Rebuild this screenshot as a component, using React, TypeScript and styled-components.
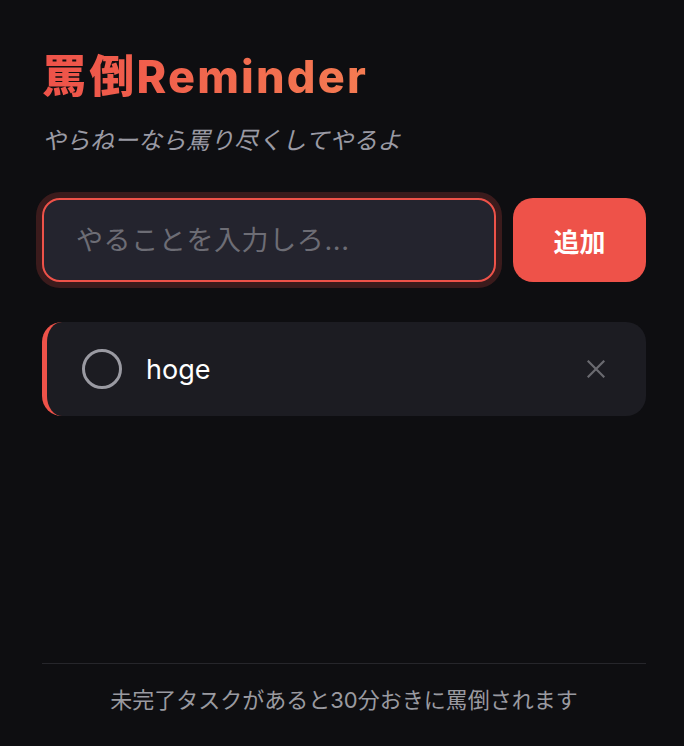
import React, { useState } from 'react';
import styled, { createGlobalStyle } from 'styled-components';

const GlobalStyle = createGlobalStyle`
  * {
    box-sizing: border-box;
  }
  html, body {
    margin: 0;
    padding: 0;
    background: #0e0e11;
  }
  body {
    font-family: Inter, "Noto Sans CJK JP", sans-serif;
    color: #ffffff;
  }
`;

const Page = styled.div`
  min-height: 100vh;
  display: flex;
  flex-direction: column;
  padding: 50px 38px 29px 42px;
`;

const Title = styled.h1`
  margin: 0;
  font-size: 45px;
  line-height: 1.2;
  font-weight: 800;
  letter-spacing: 2.2px;
  background: linear-gradient(90deg, #ee5249 0%, #f47b52 100%);
  -webkit-background-clip: text;
  background-clip: text;
  color: transparent;
  width: fit-content;
`;

const Subtitle = styled.p`
  margin: 19px 0 0;
  font-size: 24px;
  line-height: 1.5;
  font-style: italic;
  color: #9a9aa4;
`;

const InputRow = styled.form`
  display: flex;
  gap: 17px;
  margin-top: 39px;
`;

const TaskInput = styled.input`
  flex: 1;
  min-width: 0;
  height: 84px;
  padding: 0 32px;
  border: 2px solid #ee5249;
  border-radius: 18px;
  background: #24242e;
  color: #ffffff;
  font-family: Inter, "Noto Sans CJK JP", sans-serif;
  font-size: 27px;
  letter-spacing: 0.6px;
  outline: none;
  box-shadow: 0 0 0 6px rgba(238, 82, 73, 0.2);

  &::placeholder {
    color: #6d6d75;
  }
`;

const AddButton = styled.button`
  width: 133px;
  height: 84px;
  border: none;
  border-radius: 20px;
  background: #ee5249;
  color: #ffffff;
  font-family: Inter, "Noto Sans CJK JP", sans-serif;
  font-size: 26px;
  font-weight: 700;
  cursor: pointer;
`;

const TaskList = styled.ul`
  list-style: none;
  margin: 40px 0 0;
  padding: 0;
  display: flex;
  flex-direction: column;
  gap: 16px;
`;

const TaskItem = styled.li<{ $done: boolean }>`
  display: flex;
  align-items: center;
  height: 94px;
  padding: 0 35px 0 35px;
  border-left: 5px solid ${({ $done }) => ($done ? '#3a3a42' : '#ee5249')};
  border-radius: 20px;
  background: #1c1c22;
`;

const CheckCircle = styled.button<{ $done: boolean }>`
  flex-shrink: 0;
  width: 40px;
  height: 40px;
  padding: 0;
  border: 3px solid #9a9aa2;
  border-radius: 50%;
  background: ${({ $done }) => ($done ? '#9a9aa2' : 'transparent')};
  cursor: pointer;
`;

const TaskText = styled.span<{ $done: boolean }>`
  flex: 1;
  margin-left: 24px;
  font-size: 27px;
  color: ${({ $done }) => ($done ? '#6d6d75' : '#ffffff')};
  text-decoration: ${({ $done }) => ($done ? 'line-through' : 'none')};
`;

const DeleteButton = styled.button`
  display: flex;
  align-items: center;
  justify-content: center;
  width: 30px;
  height: 30px;
  padding: 0;
  border: none;
  background: transparent;
  color: #6a6a70;
  cursor: pointer;
`;

const Footer = styled.footer`
  margin-top: auto;
  padding-top: 20px;
  border-top: 1px solid #26262b;
  text-align: center;
  font-size: 22px;
  line-height: 1.5;
  color: #9a9aa0;
`;

type Task = { id: number; text: string; done: boolean };

const CloseIcon = () => (
  <svg width="18" height="18" viewBox="0 0 18 18" fill="none">
    <path d="M1.5 1.5L16.5 16.5M16.5 1.5L1.5 16.5" stroke="currentColor" strokeWidth="2.2" strokeLinecap="square" />
  </svg>
);

export default function App() {
  const [tasks, setTasks] = useState<Task[]>([{ id: 1, text: 'hoge', done: false }]);
  const [value, setValue] = useState('');

  const onSubmit = (e: React.FormEvent) => {
    e.preventDefault();
    if (!value.trim()) return;
    setTasks([...tasks, { id: Date.now(), text: value.trim(), done: false }]);
    setValue('');
  };

  const toggle = (id: number) => {
    setTasks(tasks.map((t) => (t.id === id ? { ...t, done: !t.done } : t)));
  };

  const remove = (id: number) => {
    setTasks(tasks.filter((t) => t.id !== id));
  };

  return (
    <>
      <GlobalStyle />
      <Page>
        <Title>罵倒Reminder</Title>
        <Subtitle>やらねーなら罵り尽くしてやるよ</Subtitle>
        <InputRow onSubmit={onSubmit}>
          <TaskInput
            placeholder="やることを入力しろ..."
            value={value}
            onChange={(e) => setValue(e.target.value)}
          />
          <AddButton type="submit">追加</AddButton>
        </InputRow>
        <TaskList>
          {tasks.map((task) => (
            <TaskItem key={task.id} $done={task.done}>
              <CheckCircle $done={task.done} onClick={() => toggle(task.id)} />
              <TaskText $done={task.done}>{task.text}</TaskText>
              <DeleteButton onClick={() => remove(task.id)}>
                <CloseIcon />
              </DeleteButton>
            </TaskItem>
          ))}
        </TaskList>
        <Footer>未完了タスクがあると30分おきに罵倒されます</Footer>
      </Page>
    </>
  );
}
